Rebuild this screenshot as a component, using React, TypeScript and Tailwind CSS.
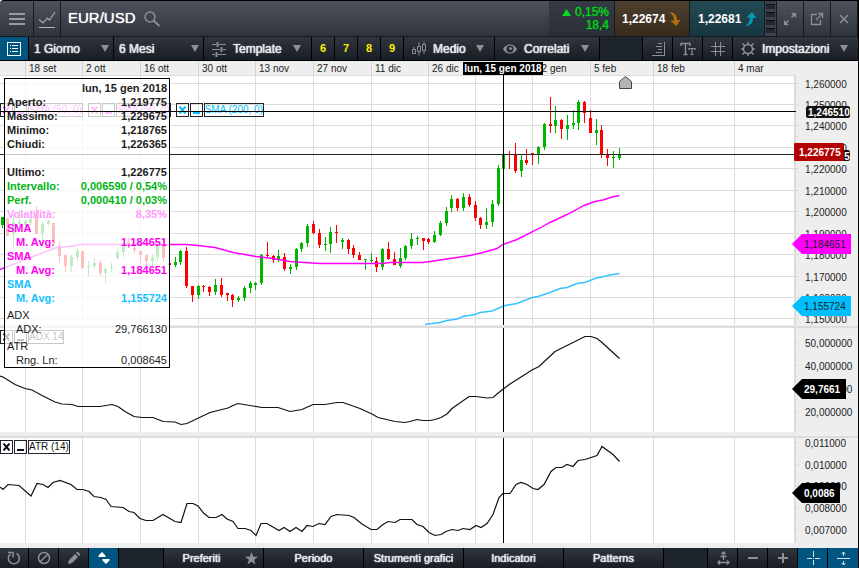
import { useState } from 'react'
import type { ReactNode } from 'react'
import clsx from 'clsx'

type Point = [number, number]

const months = [
  { label: '', span: 25 },
  { label: '18 set', span: 57 },
  { label: '2 ott', span: 58 },
  { label: '16 ott', span: 58 },
  { label: '30 ott', span: 57 },
  { label: '13 nov', span: 58 },
  { label: '27 nov', span: 58 },
  { label: '11 dic', span: 57 },
  { label: '26 dic', span: 47 },
  { label: '8 gen', span: 57 },
  { label: '22 gen', span: 58 },
  { label: '5 feb', span: 63 },
  { label: '18 feb', span: 81 },
  { label: '4 mar', span: 60 },
]

const columns = [25, 82, 140, 198, 255, 313, 371, 428, 475, 532, 590, 653, 734]

const priceTicks = [
  { y: 8, label: '1,260000' },
  { y: 29, label: '1,250000' },
  { y: 50, label: '1,240000' },
  { y: 72, label: '1,230000' },
  { y: 93, label: '1,220000' },
  { y: 115, label: '1,210000' },
  { y: 136, label: '1,200000' },
  { y: 158, label: '1,190000' },
  { y: 179, label: '1,180000' },
  { y: 201, label: '1,170000' },
  { y: 222, label: '1,160000' },
  { y: 243, label: '1,150000' },
]

const adxTicks = [
  { y: 14, label: '50,000000' },
  { y: 37, label: '40,000000' },
  { y: 60, label: '30,000000' },
  { y: 83, label: '20,000000' },
]

const atrTicks = [
  { y: 4, label: '0,011000' },
  { y: 26, label: '0,010000' },
  { y: 47, label: '0,009000' },
  { y: 69, label: '0,008000' },
  { y: 91, label: '0,007000' },
]

// x, high, low, body top, body bottom, 1 = up / 0 = down
const candles = [
  [2, 142, 153, 142, 150, 1], [7, 143, 161, 143, 161, 0], [13, 140, 172, 147, 159, 1],
  [19, 135, 153, 147, 149, 1], [25, 145, 153, 146, 150, 1], [30, 142, 150, 144, 148, 1],
  [36, 131, 159, 139, 159, 0], [42, 147, 165, 149, 159, 1], [48, 145, 150, 146, 149, 1],
  [53, 148, 169, 148, 169, 0], [59, 167, 188, 171, 181, 0], [65, 180, 197, 180, 191, 0],
  [71, 180, 197, 182, 191, 1], [77, 173, 186, 176, 182, 1], [82, 176, 194, 176, 193, 0],
  [88, 186, 202, 191, 192, 1], [94, 183, 194, 188, 191, 1], [100, 185, 201, 188, 198, 0],
  [105, 193, 208, 194, 198, 1], [111, 188, 197, 192, 193, 1], [117, 174, 184, 177, 183, 1],
  [123, 168, 182, 171, 177, 1], [128, 163, 173, 167, 170, 0], [134, 170, 178, 173, 175, 0],
  [140, 176, 188, 176, 180, 0], [146, 180, 192, 180, 186, 0], [152, 179, 192, 182, 186, 1],
  [157, 167, 187, 169, 182, 1], [163, 165, 187, 169, 183, 0], [169, 188, 190, 188, 190, 0],
  [175, 182, 192, 187, 190, 1], [180, 175, 190, 176, 187, 1], [186, 172, 213, 176, 211, 0],
  [192, 211, 227, 211, 220, 0], [198, 210, 224, 211, 220, 1], [203, 210, 217, 211, 212, 0],
  [209, 211, 221, 212, 217, 0], [215, 204, 220, 210, 217, 1], [221, 203, 222, 210, 220, 0],
  [227, 218, 226, 218, 220, 0], [232, 219, 232, 220, 225, 0], [238, 221, 227, 223, 225, 1],
  [244, 211, 226, 213, 223, 1], [250, 206, 218, 208, 213, 1], [255, 207, 215, 208, 210, 1],
  [261, 179, 210, 180, 208, 1], [267, 167, 182, 180, 181, 0], [273, 180, 188, 181, 185, 0],
  [278, 175, 187, 181, 185, 1], [284, 178, 196, 182, 194, 0], [290, 189, 199, 192, 194, 1],
  [296, 173, 195, 174, 192, 1], [301, 167, 177, 168, 174, 1], [307, 149, 172, 151, 168, 1],
  [313, 146, 159, 149, 158, 0], [319, 154, 173, 158, 170, 0], [325, 162, 176, 169, 170, 1],
  [330, 152, 178, 157, 169, 1], [336, 150, 168, 157, 158, 0], [342, 163, 174, 165, 167, 1],
  [348, 164, 179, 165, 174, 0], [353, 170, 183, 173, 180, 0], [359, 177, 185, 180, 185, 0],
  [365, 184, 195, 184, 185, 1], [371, 178, 188, 185, 186, 1], [376, 182, 197, 186, 192, 0],
  [382, 173, 195, 174, 192, 1], [388, 167, 185, 174, 184, 0], [394, 177, 190, 184, 190, 0],
  [400, 173, 193, 183, 191, 1], [405, 170, 185, 171, 183, 1], [411, 158, 174, 164, 171, 1],
  [417, 161, 170, 163, 164, 1], [423, 163, 175, 163, 166, 0], [428, 163, 169, 164, 167, 0],
  [434, 156, 168, 160, 167, 1], [440, 146, 161, 148, 160, 1], [446, 132, 151, 136, 148, 1],
  [451, 120, 137, 124, 133, 1], [457, 123, 136, 124, 133, 0], [463, 118, 136, 122, 133, 1],
  [469, 119, 132, 122, 130, 0], [475, 126, 146, 130, 143, 0], [480, 142, 154, 143, 150, 0],
  [486, 133, 154, 147, 150, 1], [492, 125, 152, 129, 147, 1], [498, 90, 131, 93, 129, 1],
  [503, 79, 94, 80, 94, 1], [509, 76, 94, 79, 80, 0], [515, 68, 98, 79, 96, 0],
  [521, 80, 102, 85, 96, 1], [526, 74, 90, 85, 88, 0], [532, 78, 90, 78, 80, 0],
  [538, 71, 89, 72, 80, 1], [544, 48, 75, 49, 72, 1], [550, 22, 58, 49, 51, 0],
  [555, 31, 58, 45, 51, 1], [561, 44, 64, 45, 54, 0], [567, 40, 65, 50, 54, 1],
  [573, 35, 54, 48, 50, 1], [578, 25, 55, 27, 48, 1], [584, 26, 48, 27, 38, 0],
  [590, 35, 58, 43, 58, 0], [596, 44, 70, 55, 58, 1], [601, 50, 83, 55, 80, 0],
  [607, 74, 91, 79, 83, 0], [613, 76, 93, 82, 83, 1], [619, 73, 85, 79, 83, 1],
]

const sma50 =
  '0,194.5 55,173 72,171 82,169.5 186,169.5 198,170.5 215,172.5 233,177.5 256,181.5 273,183.5 290,186.5 304,187.5 320,188.5 383,188.5 390,187.5 423,187.5 437,185.5 450,183.5 470,180.5 483,177.5 497,173.5 503,169.5 517,164.5 537,154.5 550,147.5 567,139.5 584,130.5 595,126.5 603,125 612,122 619.5,120.5'
const sma200 =
  '425,249.5 440,247.5 447,245.5 457,244 463,241.5 475,239.5 480,237.5 492,236 505,230.5 517,228.5 532,222.5 538,221.5 550,217.5 560,213.5 567,212.5 577,208.5 585,207.5 595,203.5 610,200 619.5,198.5'
const adx =
  '0,48 3,49 15,56.5 25,60.5 32,62 42,67.5 48,70.5 55,74 62,76 72,76.5 78,78.5 100,78.5 112,76.5 118,78.5 125,83.5 134,88.5 142,89.5 153,89.5 163,93.5 175,94 181,96.5 187,95.5 210,84.5 228,80 233,77.5 238,75.5 262,79.5 278,79.5 290,83.5 302,81.5 313,76.5 325,76.5 337,74.5 343,74.5 360,80.5 372,86 378,89.5 395,93.5 405,94.5 410,93.5 417,91.5 423,92.5 430,92.5 435,91.5 441,89.5 447,86 452,80.5 469,68.5 476,68.5 487,70 493,69.5 500,63.5 510,56 532,42 539,38.5 555,23.5 585,8.5 591,8.5 597,10.5 602,14.5 619.5,30.5'
const atr =
  '0,49 3,51.5 8,46.5 19,47.5 31,58 37,45.5 43,46.5 48,49.5 53,44.5 60,42.5 71,46.5 77,51.5 83,51.5 89,53.5 94,58.5 101,59.5 106,61.5 111,68.5 123,69.5 129,73.5 134,74.5 140,80.5 146,82.5 153,82.5 163,76.5 175,83.5 181,84.5 187,65.5 193,65.5 198,68 204,75.5 209,79.5 216,79.5 222,76.5 227,81 233,83.5 238,90.5 245,90.5 251,92.5 256,97.5 261,85.5 267,85.5 279,92.5 284,89.5 290,93.5 296,89.5 302,93.5 307,87.5 313,88.5 319,85.5 325,86.5 331,78.5 337,76.5 349,77.5 354,79.5 362,86 371,91.5 377,91.5 383,86.5 388,83.5 395,84.5 400,81.5 412,81.5 417,86.5 423,88.5 429,94.5 435,97.5 441,96.5 446,93.5 452,91.5 458,92.5 463,90.5 470,91.5 476,87.5 481,89.5 487,85.5 493,76.5 499,59.5 503,55.5 510,55.5 516,46.5 521,44.5 527,46.5 533,50.5 538,51.5 544,46.5 551,33.5 556,29.5 562,29.5 567,26.5 573,28.5 578,22.5 585,21.5 597,17.5 602,8.5 613,16.5 619.5,23.5'

const GREY = '#8b9095'

function Icon({ size = 16, children }: { size?: number; children: ReactNode }) {
  return (
    <svg width={size} height={size} viewBox={`0 0 ${size} ${size}`} fill="none" stroke={GREY} className="shrink-0">
      {children}
    </svg>
  )
}

function Arrow({ className }: { className?: string }) {
  return (
    <svg width="8" height="7" viewBox="0 0 8 7" className={clsx('pointer-events-none shrink-0', className)}>
      <path d="M0 0h8L4 7z" fill={GREY} />
    </svg>
  )
}

/* ---------- header ---------- */

function HeaderButton({ label, wide, children }: { label: string; wide?: boolean; children: ReactNode }) {
  return (
    <button
      aria-label={label}
      className={clsx('flex items-center justify-center border-r border-[#15181d]', wide ? 'w-[34px]' : 'w-[27px]')}
    >
      {children}
    </button>
  )
}

function Header() {
  return (
    <header className="flex h-[37px] rounded-tl-sm border-y border-t-black border-b-[#15181d] bg-linear-to-b from-[#4e525d] to-[#2e343c]">
      <HeaderButton label="Menu" wide>
        <Icon>
          <path d="M0 3h16M0 8h16M0 13h16" strokeWidth="2" stroke="#989ca1" />
        </Icon>
      </HeaderButton>
      <HeaderButton label="Grafico">
        <Icon size={18}>
          <path d="M1 9.500l4 3.500L9.500 8l2 2L17 2" stroke="#a4a8ac" strokeWidth="1.200" />
          <path d="M1 17.500h16" stroke="#b4b8bc" />
        </Icon>
      </HeaderButton>
      <div className="flex flex-1 items-center gap-2 pl-[7px]">
        <h1 className="text-[15px] text-white [text-shadow:0_0_1px_currentColor]">EUR/USD</h1>
        <button aria-label="Cerca">
          <Icon>
            <circle cx="6" cy="6" r="5" strokeWidth="1.500" />
            <path d="M9.500 9.500l6 5.500" strokeWidth="1.700" />
          </Icon>
        </button>
      </div>
      <div className="flex w-[65px] flex-col items-end justify-center bg-[#262c35]/60 pr-[5px] text-[12px] leading-[13px] text-[#00d916] [text-shadow:0_0_1px_currentColor]">
        <span className="flex items-center gap-1">
          <svg width="9" height="7" viewBox="0 0 9 7">
            <path d="M4.500 0L9 7H0z" fill="#00e01a" />
          </svg>
          0,15%
        </span>
        <span>18,4</span>
      </div>
      <button className="flex w-[76px] items-center gap-1 border-x border-[#15181d] bg-linear-to-b from-[#4d4030] to-[#372b1b] pl-[7px] text-[12px] font-bold text-white">
        1,22674
        <svg width="12" height="14" viewBox="0 0 12 14">
          <path d="M0 0c5 0 8 3 8 8h3.500L7 14 1.500 8.500H5C5 5 3.500 2 0 0z" fill="#b0700f" />
        </svg>
      </button>
      <button className="flex w-[75px] items-center gap-1 border-r border-[#15181d] bg-linear-to-b from-[#234b55] to-[#163740] pl-2 text-[12px] font-bold text-white">
        1,22681
        <svg width="12" height="14" viewBox="0 0 12 14">
          <path d="M0 14c5 0 8-3 8-8h3.500L7 0 1.500 5.500H5C5 9 3.500 12 0 14z" fill="#0099b5" />
        </svg>
      </button>
      <div className="flex w-3 flex-col gap-[3px] border-r border-[#15181d] bg-[#3a414c] px-px py-[3px]">
        {[0, 1, 2, 3].map(i => (
          <span key={i} className="flex-1 border-t border-[#0d1014] bg-[#20262e]" />
        ))}
      </div>
      <HeaderButton label="Espandi">
        <Icon size={14}>
          <path d="M8.500 5.500l4-4M5.500 8.500l-4 4" strokeWidth="1.300" />
          <path d="M8 1h5v5zM1 8v5h5z" fill={GREY} stroke="none" />
        </Icon>
      </HeaderButton>
      <HeaderButton label="Apri in una nuova finestra">
        <Icon size={14}>
          <path d="M7 2.500H1.500v10h9V8M8 1.500h4.500V6M12.500 1.500L6 8" strokeWidth="1.300" />
        </Icon>
      </HeaderButton>
      <HeaderButton label="Chiudi">
        <Icon size={10}>
          <path d="M1 1l8 8M9 1L1 9" strokeWidth="1.500" />
        </Icon>
      </HeaderButton>
    </header>
  )
}

/* ---------- toolbar ---------- */

const barText = 'text-[12px] text-[#e3e7ea] [text-shadow:0_0_1px_currentColor,0_0_1px_currentColor]'
const cell = 'flex items-center border-r border-black bg-linear-to-b from-[#30363e] to-[#191d24]'

function Picker({ label, value, options, className }: { label: string; value: string; options: string[]; className: string }) {
  const [current, setCurrent] = useState(value)
  return (
    <div className={clsx(cell, 'relative', className)}>
      <select
        aria-label={label}
        value={current}
        onChange={e => setCurrent(e.target.value)}
        className={clsx('w-full appearance-none bg-transparent pl-[5px] outline-none', barText)}
      >
        {options.map(o => (
          <option key={o} className="bg-[#20252c]">{o}</option>
        ))}
      </select>
      <Arrow className="absolute right-1" />
    </div>
  )
}

function MenuButton({ label, icon, className }: { label: string; icon: ReactNode; className: string }) {
  return (
    <button className={clsx(cell, 'justify-between pr-[10px] pl-[7px]', className)}>
      <span className={clsx('flex items-center gap-[6px]', barText)}>
        {icon}
        {label}
      </span>
      <Arrow />
    </button>
  )
}

function Toolbar() {
  return (
    <nav className="flex h-6 border-b border-black bg-[#1e242c]">
      <button aria-label="Elenco" className="flex w-[29px] items-center justify-center border-r border-black bg-[#005681]">
        <svg width="14" height="14" viewBox="0 0 14 14" fill="none" stroke="#fff" shapeRendering="crispEdges">
          <path d="M.5.500h13v13H.5zM5 3.500h6M5 6.500h6M5 9.500h6M3 3.500h1M3 6.500h1M3 9.500h1" />
        </svg>
      </button>
      <Picker label="Intervallo" value="1 Giorno" options={['1 Giorno', '1 Settimana', '1 Mese']} className="w-[85px]" />
      <Picker label="Periodo" value="6 Mesi" options={['3 Mesi', '6 Mesi', '1 Anno']} className="w-[90px]" />
      <MenuButton
        label="Template"
        className="w-[108px]"
        icon={
          <Icon>
            <path d="M1 3.500h4M8 3.500h7M1 8.500h8M12 8.500h3M1 13.500h3M7 13.500h8" />
            <path d="M6.500 1v5M10.500 6v5M5.500 11v5" strokeWidth="2" />
          </Icon>
        }
      />
      {['6', '7', '8', '9'].map(n => (
        <button key={n} className={clsx(cell, 'w-[23px] justify-center text-[11px] font-bold text-[#ffee00]')}>
          {n}
        </button>
      ))}
      <MenuButton
        label="Medio"
        className="w-[91px]"
        icon={
          <Icon>
            <path d="M1.500 8.500h3v4h-3zM6.500 5.500h3v5h-3zM11.500 3.500h3v6h-3zM3 6v2.500M8 1.500v4M8 10.500v4M13 1v2.500M13 9.500V13" />
          </Icon>
        }
      />
      <MenuButton
        label="Correlati"
        className="w-[105px]"
        icon={
          <Icon>
            <path d="M1 8c3-6 11-6 14 0-3 6-11 6-14 0z" fill={GREY} stroke="none" />
            <circle cx="8" cy="8" r="3.500" fill="#20252c" stroke="none" />
            <circle cx="8.500" cy="7.500" r="1.500" fill={GREY} stroke="none" />
          </Icon>
        }
      />
      <div className="flex-1 border-r border-black" />
      <button aria-label="Scala" className={clsx(cell, 'w-[30px] justify-center')}>
        <Icon>
          <path d="M14.500 1v13.500H2M8 2.500h4M6 5.500h6M8 8.500h4M6 11.500h6" shapeRendering="crispEdges" />
        </Icon>
      </button>
      <button aria-label="Testo" className={clsx(cell, 'w-[30px] justify-center')}>
        <Icon>
          <path d="M1 5V2.500h9V5M5.500 2.500v11M3.500 13.500h4" strokeWidth="1.400" />
          <path d="M9 9V7.500h6V9M12 7.500v6M10.500 13.500h3" strokeWidth="1.200" />
        </Icon>
      </button>
      <button aria-label="Griglia" className={clsx(cell, 'w-[30px] justify-center')}>
        <Icon>
          <path d="M5.500 1v14M10.500 1v14M1 5.500h14M1 10.500h14" shapeRendering="crispEdges" />
        </Icon>
      </button>
      <MenuButton
        label="Impostazioni"
        className="w-[125px] border-r-0"
        icon={
          <Icon>
            <circle cx="8" cy="8" r="4.500" strokeWidth="1.500" />
            <path d="M8 1v2.500M8 12.500V15M1 8h2.500M12.500 8H15M2.500 2.500l2.500 2.500M11 11l2.500 2.500M13.500 2.500L11 5M5 11l-2.500 2.500" strokeWidth="1.500" />
          </Icon>
        }
      />
    </nav>
  )
}

/* ---------- chart ---------- */

function DateAxis() {
  return (
    <div
      className="relative grid h-[14px] bg-[#eee] pr-16 text-[10px] leading-[15px] text-[#222]"
      style={{ gridTemplateColumns: months.map(m => `minmax(0, ${m.span}fr)`).join(' ') }}
    >
      {months.map((m, i) => (
        <span key={i} className={clsx('whitespace-nowrap', i > 0 && 'border-l border-[#d4d4d4] pl-[3px]')}>
          {m.label}
        </span>
      ))}
      <span className="absolute top-px left-[54%] bg-black px-px leading-[13px] font-bold whitespace-nowrap text-white">
        lun, 15 gen 2018
      </span>
    </div>
  )
}

function Plot({ height, className, children }: { height: number; className: string; children: ReactNode }) {
  return (
    <svg viewBox={`0 0 794 ${height}`} preserveAspectRatio="none" className={clsx('min-w-0 flex-1 bg-white', className)}>
      {columns.map(x => (
        <rect key={x} x={x} y="0" width="1" height={height} fill="#dcdcdc" />
      ))}
      {children}
      <rect x="503" y="0" width="1" height={height} fill="#000" />
    </svg>
  )
}

function Axis({ ticks, className, children }: { ticks: { y: number; label: string }[]; className: string; children: ReactNode }) {
  return (
    <svg className={clsx('relative w-16 shrink-0 overflow-visible border-l-2 border-[#dcdcdc] bg-[#eee] text-[10px]', className)}>
      {ticks.map(t => (
        <g key={t.label}>
          <rect x="0" y={t.y} width="3" height="1" fill="#dcdcdc" />
          <rect x="0" y={t.y + 11} width="2" height="1" fill="#dcdcdc" />
          <text x="9" y={t.y + 5} fill="#222">{t.label}</text>
        </g>
      ))}
      {children}
    </svg>
  )
}

function Tag({ y, right, fill, color, label, bold }: { y: number; right: number; fill: string; color: string; label: string; bold?: boolean }) {
  const points: Point[] = [[-4, y], [6, y - 10], [right, y - 10], [right, y + 10], [6, y + 10]]
  return (
    <g>
      <polygon points={points.join(' ')} fill={fill} />
      <text x="8" y={y + 4} fill={color} className={bold ? 'font-bold' : ''}>{label}</text>
    </g>
  )
}

function Chip({ label, color }: { label: string; color: string }) {
  return (
    <div className="flex h-[14px] gap-px text-[10px]" style={{ color }}>
      <button aria-label={`Rimuovi ${label}`} className="flex w-[13px] items-center justify-center border border-[#20242e]">
        <svg width="7" height="8" viewBox="0 0 7 8" stroke="currentColor" strokeWidth="2">
          <path d="M.5.500l6 7M6.500.500l-6 7" />
        </svg>
      </button>
      <button aria-label={`Riduci ${label}`} className="flex w-[13px] items-end justify-center border border-[#20242e] pb-[2px]">
        <span className="h-[2px] w-[7px] bg-current" />
      </button>
      <span className="border border-[#20242e] leading-[12px] whitespace-nowrap">{label}</span>
    </div>
  )
}

function Row({ label, value, className }: { label: string; value?: string; className?: string }) {
  return (
    <div className={clsx('flex h-[14px] justify-between', className)}>
      <dt>{label}</dt>
      <dd>{value}</dd>
    </div>
  )
}

function DataBox() {
  return (
    <dl className="absolute top-[3px] left-1 h-[290px] w-[166px] border border-black bg-white/75 px-[2px] pt-[2px] text-[11px] leading-[14px] text-[#1c1c1c]">
      <div className="font-bold">
        <Row label="" value="lun, 15 gen 2018" />
        <Row label="Aperto:" value="1,219775" />
        <Row label="Massimo:" value="1,229675" />
        <Row label="Minimo:" value="1,218765" />
        <Row label="Chiudi:" value="1,226365" />
        <Row label="" />
        <Row label="Ultimo:" value="1,226775" />
        <Row label="Intervallo:" value="0,006590 / 0,54%" className="text-[#00b414]" />
        <Row label="Perf." value="0,000410 / 0,03%" className="text-[#00b414]" />
        <Row label="Volatilità:" value="8,35%" className="text-[#ff99ff]" />
        <Row label="SMA" className="text-[#ff00f0]" />
        <Row label="M. Avg:" value="1,184651" className="pl-[9px] text-[#ff00f0]" />
        <Row label="SMA" className="text-[#ff00f0]" />
        <Row label="M. Avg:" value="1,184651" className="pl-[9px] text-[#ff00f0]" />
        <Row label="SMA" className="text-[#14bfff]" />
        <Row label="M. Avg:" value="1,155724" className="pl-[9px] text-[#14bfff]" />
      </div>
      <div className="pt-[3px]">
        <Row label="ADX" />
        <Row label="ADX:" value="29,766130" className="pl-[9px]" />
      </div>
      <div className="pt-[3px]">
        <Row label="ATR" />
        <Row label="Rng. Ln:" value="0,008645" className="pl-[9px]" />
      </div>
    </dl>
  )
}

function Charts() {
  return (
    <main className="relative bg-[#eee]">
      <div className="flex">
        <Plot height={250} className="h-[250px]">
          <rect x="0" y="0" width="794" height="1" fill="#dcdcdc" />
          {priceTicks.map(t => (
            <rect key={t.y} x="0" y={t.y} width="794" height="1" fill="#dcdcdc" />
          ))}
          {candles.map(([x, high, low, top, bottom, up]) => (
            <g key={x} fill={up ? '#00b400' : '#ff0000'}>
              <rect x={x} y={high} width="1" height={low - high} />
              <rect x={x - 1} y={top} width="3" height={bottom - top} />
            </g>
          ))}
          <polyline points={sma50} fill="none" stroke="#ff00ff" strokeWidth="1.400" />
          <polyline points={sma200} fill="none" stroke="#33c4ff" strokeWidth="1.400" />
          <rect x="0" y="79" width="794" height="1" fill="#222" />
          <path d="M619.500 6.500l6-5 6 5v7h-12z" fill="#b4b4b4" stroke="#444" />
        </Plot>
        <Axis ticks={priceTicks} className="h-[250px]">
          <rect x="10" y="31" width="44" height="12" rx="2" fill="#111" />
          <text x="12" y="41" fill="#fff" className="font-bold">1,246510</text>
          <rect x="10" y="75" width="44" height="11" rx="2" fill="#111" />
          <text x="12" y="85" fill="#fff" className="font-bold">1,226775</text>
          <rect x="-2" y="68" width="50" height="18" rx="1" fill="#b40000" />
          <text x="3" y="81" fill="#fff" className="font-bold">1,226775</text>
          <Tag y={169} right={55} fill="#ff00ff" color="#222" label="1,184651" />
          <Tag y={231} right={55} fill="#00bfff" color="#222" label="1,155724" />
        </Axis>
      </div>
      <div className="mt-px h-[2px] bg-[#dcdcdc]" />
      <div className="flex">
        <Plot height={104} className="h-[104px]">
          <polyline points={adx} fill="none" stroke="#111" strokeWidth="1.200" />
        </Plot>
        <Axis ticks={adxTicks} className="h-[104px]">
          <Tag y={61} right={50} fill="#000" color="#fff" label="29,7661" bold />
        </Axis>
      </div>
      <div className="mt-1 h-[2px] bg-[#dcdcdc]" />
      <div className="flex">
        <Plot height={105} className="h-[105px]">
          <polyline points={atr} fill="none" stroke="#111" strokeWidth="1.200" />
        </Plot>
        <Axis ticks={atrTicks} className="h-[105px]">
          <Tag y={55} right={44} fill="#000" color="#fff" label="0,0086" bold />
        </Axis>
      </div>
      <div className="h-[5px]" />

      <div className="absolute top-7 left-0 flex gap-[5px]">
        <Chip label="SMA (50, 0)" color="#ff00ff" />
        <Chip label="SMA (50, 0)" color="#ff00ff" />
        <Chip label="SMA (200, 0)" color="#00bfff" />
      </div>
      <div className="absolute top-[255px] left-0">
        <Chip label="ADX 14" color="#111" />
      </div>
      <div className="absolute top-[365px] left-0">
        <Chip label="ATR (14)" color="#111" />
      </div>
      <DataBox />
      <div className="absolute top-9 right-[62px] left-0 h-px bg-black" />
    </main>
  )
}

/* ---------- footer ---------- */

const footerText = 'text-[11px] text-[#e3e7ea] [text-shadow:0_0_1px_currentColor,0_0_1px_currentColor]'

function FooterButton({ label, active, children }: { label: string; active?: boolean; children: ReactNode }) {
  return (
    <button
      aria-label={label}
      className={clsx(
        'flex w-[30px] items-center justify-center border-r border-black last:border-r-0',
        active ? 'bg-[#005681]' : 'bg-linear-to-b from-[#30363e] to-[#191d24]'
      )}
    >
      {children}
    </button>
  )
}

function Footer() {
  return (
    <footer className="flex h-5 bg-[#1e242c]">
      <button aria-label="Ricarica" className={clsx(cell, 'w-[29px] justify-center')}>
        <Icon size={14}>
          <path d="M9.500 2.500a5.500 5.500 0 1 1-6 .5" strokeWidth="1.500" />
          <path d="M1 1.500h5v5" strokeWidth="1.500" />
        </Icon>
      </button>
      <FooterButton label="Annulla">
        <Icon size={14}>
          <circle cx="7" cy="7" r="5.500" strokeWidth="1.500" />
          <path d="M3 11l8-8" strokeWidth="1.500" />
        </Icon>
      </FooterButton>
      <FooterButton label="Disegna">
        <Icon size={14}>
          <path d="M1 13l1-4 6-6 3 3-6 6zM9 2l1.500-1.500 3 3L12 5z" fill={GREY} stroke="none" />
        </Icon>
      </FooterButton>
      <FooterButton label="Ordina" active>
        <svg width="12" height="12" viewBox="0 0 12 12" fill="#fff">
          <path d="M4 0l3.500 3.500V5h-7V3.500zM8 12l3.500-3.500V7h-7v1.500z" />
        </svg>
      </FooterButton>
      <div className="w-[45px] border-r border-black" />
      <div className={clsx(cell, 'flex-1')}>
        <button className={clsx('flex-1 pr-[6px]', footerText)}>Preferiti</button>
        <button aria-label="Aggiungi ai preferiti" className="pr-[5px]">
          <Icon size={13}>
            <path d="M6.500 0l1.700 4.600 4.800.2-3.800 3 1.300 4.700-4-2.700-4 2.700 1.300-4.700L0 4.800l4.800-.2z" fill={GREY} stroke="none" />
          </Icon>
        </button>
      </div>
      {['Periodo', 'Strumenti grafici', 'Indicatori', 'Patterns'].map(t => (
        <button key={t} className={clsx(cell, 'flex-1 justify-center', footerText)}>
          {t}
        </button>
      ))}
      <div className="w-11 border-r border-black" />
      <FooterButton label="Adatta">
        <Icon size={14}>
          <path d="M7.500 1v8M4.500 5.500h6M5.500 3l2-2 2 2M2 11.500h11M4 9.500l-2 2 2 2M11 9.500l2 2-2 2" strokeWidth="1.300" />
        </Icon>
      </FooterButton>
      <FooterButton label="Riduci">
        <Icon size={10}>
          <path d="M0 5h10" strokeWidth="2" />
        </Icon>
      </FooterButton>
      <FooterButton label="Ingrandisci">
        <Icon size={10}>
          <path d="M0 5h10M5 0v10" strokeWidth="2" />
        </Icon>
      </FooterButton>
      <FooterButton label="Mirino" active>
        <svg width="14" height="14" viewBox="0 0 14 14" stroke="#d7e6ee" fill="none">
          <path d="M7.500 0v6M7.500 9v5M1 7.500h5M9 7.500h5M7 7.500h1" />
        </svg>
      </FooterButton>
      <FooterButton label="Scala verticale" active>
        <svg width="14" height="14" viewBox="0 0 14 14" stroke="#d7e6ee" fill="none">
          <path d="M1 7.500h13M7.500 1v4M7.500 10v4M5.500 3l2-2 2 2M5.500 12l2 2 2-2" />
        </svg>
      </FooterButton>
    </footer>
  )
}

export default function App() {
  return (
    <div className="border-r border-black bg-[#eee] font-[Liberation_Sans,Arial,sans-serif]">
      <Header />
      <Toolbar />
      <DateAxis />
      <Charts />
      <Footer />
    </div>
  )
}
